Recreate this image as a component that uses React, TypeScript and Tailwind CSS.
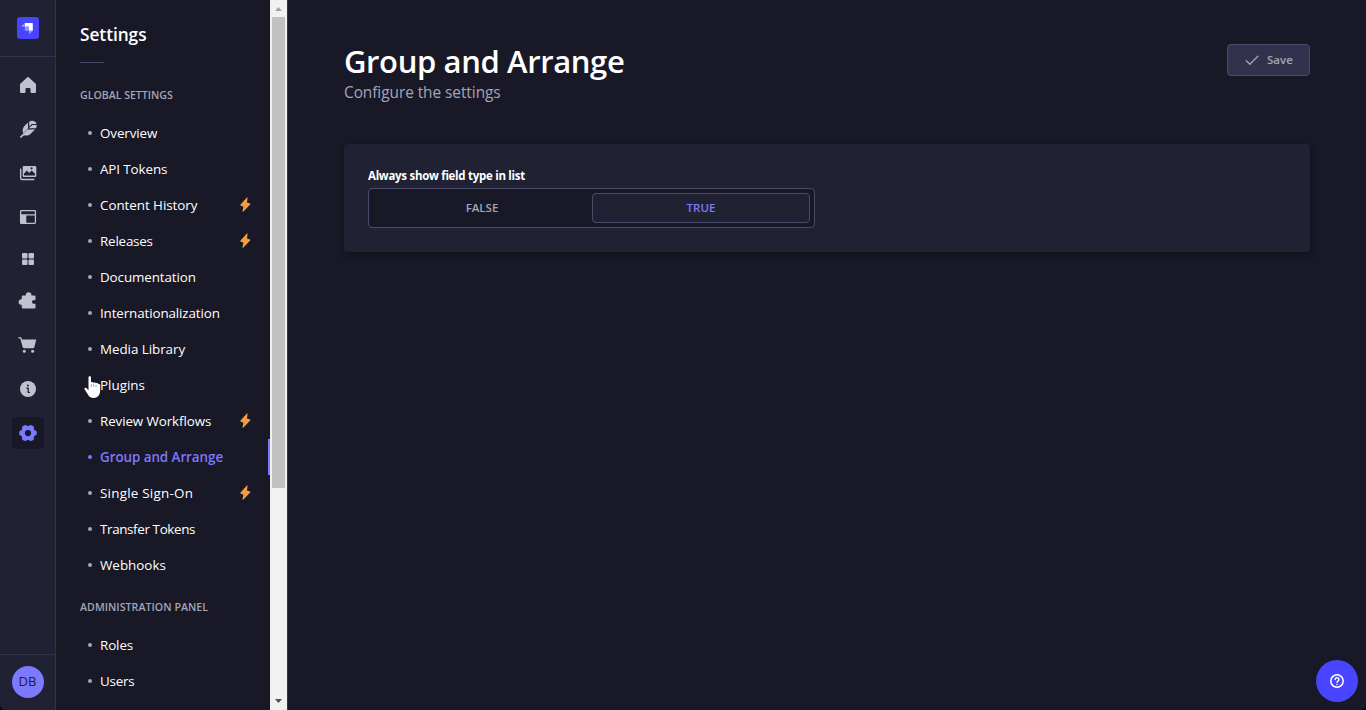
import type { ReactNode } from "react";
import { PiGearSixFill, PiPuzzlePieceFill } from "react-icons/pi";

type Item = { label: string; tracking: string; premium?: boolean; active?: boolean };

const globalItems: Item[] = [
  { label: "Overview", tracking: "tracking-[-0.1px]" },
  { label: "API Tokens", tracking: "tracking-[-0.1px]" },
  { label: "Content History", tracking: "tracking-[-0.05px]", premium: true },
  { label: "Releases", tracking: "tracking-[-0.2px]", premium: true },
  { label: "Documentation", tracking: "tracking-[-0.1px]" },
  { label: "Internationalization", tracking: "tracking-[-0.12px]" },
  { label: "Media Library", tracking: "tracking-[-0.05px]" },
  { label: "Plugins", tracking: "tracking-[0px]" },
  { label: "Review Workflows", tracking: "tracking-[-0.1px]", premium: true },
  { label: "Group and Arrange", tracking: "tracking-[-0.05px]", active: true },
  { label: "Single Sign-On", tracking: "tracking-[0.24px]", premium: true },
  { label: "Transfer Tokens", tracking: "tracking-[-0.36px]" },
  { label: "Webhooks", tracking: "tracking-[0px]" },
];

const adminItems: Item[] = [
  { label: "Roles", tracking: "tracking-[-0.1px]" },
  { label: "Users", tracking: "tracking-[-0.25px]" },
];

function Glyph({ children }: { children: ReactNode }) {
  return (
    <svg width="20" height="20" viewBox="0 0 20 20" fill="currentColor">
      {children}
    </svg>
  );
}

function NavSlot({ children, className = "" }: { children: ReactNode; className?: string }) {
  return <div className={`flex w-8 items-center justify-center ${className}`}>{children}</div>;
}

function SubNavItem({ item }: { item: Item }) {
  return (
    <li
      className={`flex h-9 items-center border-r-2 pl-8 pr-[17px] ${
        item.active ? "border-[#7b79ff] font-semibold text-[#7b79ff]" : "border-transparent text-white"
      }`}
    >
      <span className={`size-1 shrink-0 rounded-full ${item.active ? "bg-[#7b79ff]" : "bg-[#a5a5ba]"}`} />
      <span className={`ml-2 flex-1 whitespace-nowrap text-[13.4px] leading-5 ${item.tracking}`}>{item.label}</span>
      {item.premium && (
        <svg className="shrink-0" width="11" height="16" viewBox="0 0 11 16" fill="#f29d41">
          <path d="M7.500.9c.1-.5-.3-.7-.6-.4L.3 7.700c-.3.300-.2.700.2.900l2.900 1.200-.9 4.500c-.1.500.4.700.7.400l7-7.200c.3-.3.2-.8-.2-.9L7 5.400z" />
        </svg>
      )}
    </li>
  );
}

export default function App() {
  return (
    <div className="h-[710px] w-[1366px] overflow-hidden bg-[#080808] font-['Open_Sans',sans-serif]">
      <div className="relative flex h-full overflow-hidden rounded-b-[6px] bg-[#181826]">
        <nav className="flex w-14 shrink-0 flex-col border-r border-[#32324d] bg-[#212134] text-[#c0c0cf]">
          <div className="flex h-[57px] items-center justify-center border-b border-[#32324d]">
            <svg width="22" height="22" viewBox="0 0 22 22">
              <rect width="22" height="22" rx="3" fill="#4945ff" />
              <path d="M7.8 6h7.4a.6.6 0 0 1 .6.6v7.1H12V9.8H7.8z" fill="#fff" />
              <path d="M7.8 6v3.8H4.6c-.3 0-.4-.3-.2-.5zM12 13.7h3.8l-3.3 3.3c-.2.2-.5.1-.5-.2z" fill="#9593ff" />
              <path d="M7.8 9.8H12v3.9H8.3a.5.5 0 0 1-.5-.5z" fill="#9593ff" />
            </svg>
          </div>
          <div className="flex flex-1 flex-col items-center">
            <NavSlot className="mt-3 h-8">
              <Glyph>
                <path d="M10 2a1 1 0 0 1 .7.3l6.7 6.200c.4.400.6.800.6 1.300V17a1 1 0 0 1-1 1h-3.600a.9.900 0 0 1-.9-.9V14a1 1 0 0 0-1-1h-3a1 1 0 0 0-1 1v3.100a.9.900 0 0 1-.9.900H3a1 1 0 0 1-1-1V9.800c0-.5.2-.9.6-1.300l6.700-6.200A1 1 0 0 1 10 2z" />
              </Glyph>
            </NavSlot>
            <NavSlot className="mt-3 h-8">
              <Glyph>
                <path d="M10 3.400v6L5.200 14.200c-.9-2-.7-5 1-7zM11.200 2.700c2-1.300 4.500-1.200 6.200.4.500.5.900 1.100 1.100 1.800h-4.700l-2.600 2.700z" />
                <path d="M18.700 6.100c.1 1.100-.2 2.200-.7 3.100h-7.400l3.700-3.100zM17.100 10.400l-5.300 5c-.8.7-1.700 1.100-2.700 1.100H5.600L3.300 18.700a.8.8 0 0 1-1.100-1.100l7.200-7.200z" />
              </Glyph>
            </NavSlot>
            <NavSlot className="mt-3 h-8">
              <Glyph>
                <path fillRule="evenodd" d="M6 3h11a1.300 1.300 0 0 1 1.300 1.300v8.400A1.300 1.300 0 0 1 17 14H6a1.300 1.300 0 0 1-1.300-1.300V4.300A1.300 1.300 0 0 1 6 3zM6 10.800l2.800-3.200 2.300 2.300 2.600-2.500 3.300 3.300v1.900H6zm7.600-6.600a1.100 1.100 0 1 0 0 2.200 1.100 1.100 0 0 0 0-2.200z" />
                <path d="M2.700 6.200v9a1.300 1.300 0 0 0 1.300 1.300h11.800" fill="none" stroke="currentColor" strokeWidth="1.400" strokeLinecap="round" />
              </Glyph>
            </NavSlot>
            <NavSlot className="mt-3 h-8">
              <Glyph>
                <rect x="2.600" y="3.600" width="14.800" height="12.800" rx=".8" fill="none" stroke="currentColor" strokeWidth="1.300" />
                <path d="M2.600 7.200h14.800v1.300H8.300v8H2.600z" />
              </Glyph>
            </NavSlot>
            <NavSlot className="mt-[10px] h-8">
              <Glyph>
                <rect x="4" y="4" width="5.500" height="5.500" rx="1" />
                <rect x="10.500" y="4" width="5.500" height="5.500" rx="1" />
                <rect x="4" y="10.500" width="5.500" height="5.500" rx="1" />
                <rect x="10.500" y="10.500" width="5.500" height="5.500" rx="1" />
              </Glyph>
            </NavSlot>
            <NavSlot className="mt-[10px] h-8">
              <PiPuzzlePieceFill className="size-5" />
            </NavSlot>
            <NavSlot className="mt-3 h-8">
              <Glyph>
                <path d="M.8 2.200h1.800c.5 0 .9.300 1 .8l.4 1.500h14.300l-1.900 7.500a1.500 1.500 0 0 1-1.500 1.200H6.100a1.500 1.500 0 0 1-1.500-1.100L2.300 3.500H.8a.65.65 0 0 1 0-1.300z" />
                <circle cx="6.300" cy="16.300" r="1.500" />
                <circle cx="14.600" cy="16.300" r="1.500" />
              </Glyph>
            </NavSlot>
            <NavSlot className="mt-3 h-8">
              <Glyph>
                <circle cx="10" cy="10" r="8" />
                <path d="M8.800 9.200h1.400v4.200h1.200" fill="none" stroke="#212134" strokeWidth="1.300" strokeLinecap="round" strokeLinejoin="round" />
                <circle cx="9.900" cy="6.500" r="1" fill="#212134" />
              </Glyph>
            </NavSlot>
            <NavSlot className="mt-3 h-8 rounded bg-[#181826] text-[#7b79ff]">
              <PiGearSixFill className="size-5" />
            </NavSlot>
          </div>
          <div className="flex h-14 items-center justify-center border-t border-[#32324d] pb-px">
            <div className="flex size-8 items-center justify-center rounded-full bg-[#7b79ff] text-[13px] text-[#212134]">DB</div>
          </div>
        </nav>

        <aside className="w-[214px] shrink-0 overflow-hidden">
          <h2 className="ml-6 mt-[23px] whitespace-nowrap text-[17.3px] font-semibold leading-6 tracking-[-0.05px] text-white">Settings</h2>
          <div className="ml-6 mt-[15px] h-px w-6 bg-[#4a4a6a]" />
          <h3 className="ml-6 mt-6 whitespace-nowrap text-[10.6px] font-semibold leading-4 tracking-[-0.02px] text-[#a5a5ba]">GLOBAL SETTINGS</h3>
          <ul className="mt-3">
            {globalItems.map((item) => (
              <SubNavItem key={item.label} item={item} />
            ))}
          </ul>
          <h3 className="ml-6 mt-4 whitespace-nowrap text-[10.6px] font-semibold leading-4 tracking-[0.06px] text-[#a5a5ba]">ADMINISTRATION PANEL</h3>
          <ul className="mt-3">
            {adminItems.map((item) => (
              <SubNavItem key={item.label} item={item} />
            ))}
          </ul>
        </aside>

        <div className="flex w-[17px] shrink-0 flex-col items-center justify-between bg-[#f1f1f1]">
          <svg width="17" height="17" viewBox="0 0 17 17" fill="#a3a3a3">
            <path d="M5 11h7L8.500 7z" />
          </svg>
          <div className="w-[13px] flex-1">
            <div className="h-[471px] bg-[#c1c1c1]" />
          </div>
          <svg width="17" height="17" viewBox="0 0 17 17" fill="#505050">
            <path d="M5 6h7l-3.500 4z" />
          </svg>
        </div>

        <main className="flex-1 border-l border-[#32324d] px-14">
          <header className="flex items-start justify-between pt-[43px]">
            <div className="whitespace-nowrap">
              <h1 className="text-[31px] font-semibold leading-9 tracking-[-0.38px] text-white">Group and Arrange</h1>
              <p className="mt-[2px] text-[15.4px] leading-6 tracking-[-0.05px] text-[#a5a5ba]">Configure the settings</p>
            </div>
            <button className="mt-px flex h-8 w-[83px] items-center rounded border border-[#4a4a6a] bg-[#32324d] pl-4 text-[#a5a5ba]">
              <svg width="16" height="16" viewBox="0 0 16 16" fill="none" stroke="currentColor" strokeWidth="1.300" strokeLinecap="round" strokeLinejoin="round">
                <path d="M2.300 8.800l3.500 3.500 8-8" />
              </svg>
              <span className="ml-[7px] text-[11.500px] font-semibold">Save</span>
            </button>
          </header>
          <section className="mt-[39px] h-[108px] rounded bg-[#212134] px-6 pt-6 shadow-[1px_3px_8px_-1px_rgba(3,3,5,0.35)]">
            <div className="whitespace-nowrap text-[11.500px] font-bold leading-4 tracking-[-0.29px] text-white">Always show field type in list</div>
            <div className="mt-1 flex h-10 w-[447px] rounded border border-[#4a4a6a] bg-[#181826] p-1 text-[11.500px] font-semibold">
              <div className="flex w-[219px] items-center justify-center pr-px text-[#a5a5ba]">FALSE</div>
              <div className="flex h-[30px] flex-1 items-center justify-center rounded border border-[#4a4a6a] bg-[#212134] text-[#7b79ff]">TRUE</div>
            </div>
          </section>
        </main>

        <button className="absolute bottom-2 right-2 flex size-[42px] items-center justify-center rounded-full bg-[#4945ff] text-white">
          <svg width="16" height="16" viewBox="0 0 16 16" fill="none" stroke="currentColor" strokeWidth="1.500" strokeLinecap="round">
            <circle cx="8" cy="8" r="6.200" />
            <path d="M6.200 6.500a1.800 1.800 0 1 1 2.800 1.500c-.6.400-1 .7-1 1.300" />
            <path d="M8 11.400v.1" />
          </svg>
        </button>

        <svg className="absolute left-[83px] top-[375px]" width="19" height="25" viewBox="-1 -1 19 25">
          <path
            d="M4.500 1.300c0-1.300 2.500-1.300 2.500 0v5.200c.5-.7 2.200-.6 2.500.3.600-.6 2.200-.4 2.500.5.700-.5 2.100-.2 2.300.8.800-.2 1.900.1 1.900 1.100v5c0 3.700-1.800 7.800-6.500 7.800-3.200 0-4.700-1.500-5.800-3.600L.5 13.200c-.5-1 .8-2 1.900-1.300l2.100 2.300z"
            fill="#fff"
            stroke="#181826"
            strokeWidth="1.400"
            paintOrder="stroke"
          />
          <path d="M7.300 8v3M9.700 8.200v2.800M12.100 8.800v2.300" stroke="#55555f" strokeWidth=".5" />
        </svg>
      </div>
    </div>
  );
}
